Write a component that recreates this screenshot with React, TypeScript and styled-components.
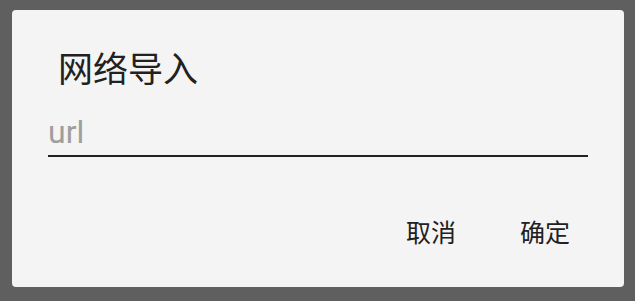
import styled, { createGlobalStyle } from 'styled-components';

const GlobalStyle = createGlobalStyle`
  html, body {
    margin: 0;
    padding: 0;
    background: #5f5f5f;
  }

  body {
    font-family: Roboto, "Noto Sans CJK SC", sans-serif;
  }
`;

const Screen = styled.div`
  box-sizing: border-box;
  display: flex;
  height: 301px;
  padding: 10px 11px 14px 12px;
  width: 635px;
`;

const Dialog = styled.div`
  background: #f4f4f4;
  border-radius: 4px;
  box-sizing: border-box;
  display: flex;
  flex-direction: column;
  padding: 36px 36px 31px 36px;
  width: 612px;
`;

const Title = styled.h2`
  color: #212121;
  font-family: "Noto Sans CJK SC", sans-serif;
  font-size: 35px;
  font-weight: 400;
  line-height: 42px;
  margin: 0 0 0 10px;
`;

const UrlInput = styled.input`
  background: transparent;
  border: none;
  border-bottom: 2px solid #222;
  border-radius: 0;
  color: #212121;
  font-family: Roboto, sans-serif;
  font-size: 32px;
  height: 34px;
  margin-top: 27px;
  outline: none;
  padding: 0 0 6px 0;
  width: 100%;

  &::placeholder {
    color: #9e9e9e;
  }
`;

const Actions = styled.div`
  display: flex;
  gap: 32px;
  justify-content: flex-end;
  margin-top: 50px;
  padding-right: 2px;
`;

const ActionButton = styled.button`
  background: none;
  border: none;
  color: #212121;
  font-family: "Noto Sans CJK SC", sans-serif;
  font-size: 25px;
  height: 48px;
  line-height: 48px;
  padding: 0 16px;
`;

export default function App() {
  return (
    <>
      <GlobalStyle />
      <Screen>
        <Dialog>
          <Title>网络导入</Title>
          <UrlInput placeholder="url" />
          <Actions>
            <ActionButton>取消</ActionButton>
            <ActionButton>确定</ActionButton>
          </Actions>
        </Dialog>
      </Screen>
    </>
  );
}
